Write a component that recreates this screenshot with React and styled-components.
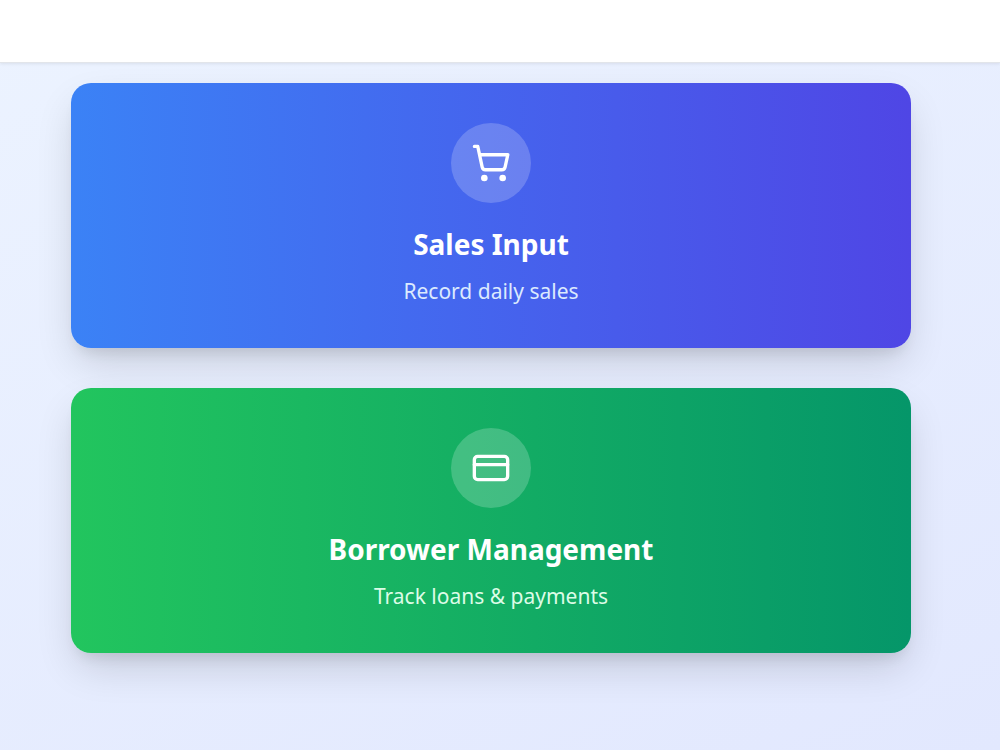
import styled, { createGlobalStyle } from 'styled-components';
import { ShoppingCart, CreditCard } from 'lucide-react';

const menuItems = [
  {
    href: '#sales',
    title: 'Sales Input',
    description: 'Record daily sales',
    icon: ShoppingCart,
    from: '#3b82f6',
    to: '#4f46e5',
    textColor: '#dbeafe',
  },
  {
    href: '#borrowers',
    title: 'Borrower Management',
    description: 'Track loans & payments',
    icon: CreditCard,
    from: '#22c55e',
    to: '#059669',
    textColor: '#dcfce7',
  },
];

const App = () => {
  return (
    <>
      <GlobalStyle />
      <Page>
        <Header />
        <Menu>
          {menuItems.map(({ href, title, description, icon: Icon, from, to, textColor }) => (
            <MenuCard key={href} href={href} $from={from} $to={to}>
              <IconCircle>
                <Icon size={40} strokeWidth={2} />
              </IconCircle>
              <CardTitle>{title}</CardTitle>
              <CardText $color={textColor}>{description}</CardText>
            </MenuCard>
          ))}
        </Menu>
      </Page>
    </>
  );
};

export default App;

// Styled Components

const GlobalStyle = createGlobalStyle`
  * {
    box-sizing: border-box;
  }

  body {
    margin: 0;
    font-family: "Noto Sans", "Open Sans", sans-serif;
  }
`;

const Page = styled.div`
  min-height: 100vh;
  display: flex;
  flex-direction: column;
  background: linear-gradient(155deg, #ecf3ff, #e2e8fe);
`;

const Header = styled.header`
  height: 63px;
  background-color: #ffffff;
  border-bottom: 1px solid #e2e5ea;
  box-shadow: 0 1px 3px rgba(0, 0, 0, 0.08);
`;

const Menu = styled.main`
  display: flex;
  flex-direction: column;
  gap: 40px;
  padding: 20px 89px 40px 71px;
`;

const MenuCard = styled.a`
  display: flex;
  flex-direction: column;
  align-items: center;
  padding: 40px;
  border-radius: 20px;
  color: #ffffff;
  text-align: center;
  text-decoration: none;
  background: linear-gradient(to right, ${(props) => props.$from}, ${(props) => props.$to});
  box-shadow: 0 18px 40px -6px rgba(0, 0, 0, 0.16), 0 10px 14px -6px rgba(0, 0, 0, 0.09);
`;

const IconCircle = styled.div`
  display: flex;
  align-items: center;
  justify-content: center;
  width: 80px;
  height: 80px;
  margin-bottom: 24px;
  border-radius: 50%;
  background-color: rgba(255, 255, 255, 0.2);
`;

const CardTitle = styled.h2`
  margin: 0 0 14px;
  font-size: 28px;
  font-weight: 700;
  line-height: 34px;
`;

const CardText = styled.p`
  margin: 0;
  color: ${(props) => props.$color};
  font-size: 21px;
  line-height: 33px;
`;
